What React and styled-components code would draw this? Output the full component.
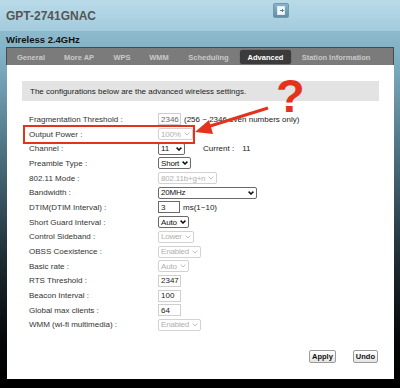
import React from 'react';
import styled, { createGlobalStyle } from 'styled-components';

const GlobalStyle = createGlobalStyle`
    html, body {
        margin: 0;
        padding: 0;
        background: #000;
    }
    body {
        font-family: 'Liberation Sans', Arial, sans-serif;
    }
`;

const Page = styled.div`
    position: relative;
    width: 400px;
    height: 388px;
    overflow: hidden;
    background: linear-gradient(180deg, #b9dbe9 0px, #a3cbdc 31px, #8dbacd 31px, #7eaec2 60px, #4d7383 150px, #1d2c33 260px, #050708 340px, #000 388px);
`;

const Header = styled.div`
    display: flex;
    align-items: center;
    height: 31px;
    padding-left: 6px;
`;

const Title = styled.div`
    font-size: 12px;
    font-weight: bold;
    color: #555;
    width: 267px;
    margin-top: 1px;
`;

const LogoutButton = styled.div`
    display: flex;
    align-items: center;
    justify-content: center;
    width: 14px;
    height: 13px;
    margin-top: -11px;
    border-radius: 2px;
    background: linear-gradient(180deg, #8ab3c8, #5f8ea6);
    border: 1px solid #6f98ad;
`;

const SubHeader = styled.div`
    display: flex;
    align-items: center;
    height: 16px;
    padding-left: 6px;
    font-size: 9.5px;
    font-weight: bold;
    color: #111;
`;

const Frame = styled.div`
    margin: 0 6px 0 6px;
`;

const TabBar = styled.div`
    display: flex;
    align-items: center;
    height: 16px;
    padding-top: 1px;
    background: #7b7b7b;
    border: 1px solid #4a4a4a;
    border-bottom: none;
`;

const Tab = styled.div`
    display: flex;
    align-items: center;
    justify-content: center;
    height: 14px;
    width: ${(p) => p.$w}px;
    border-radius: 3px;
    font-size: 7.5px;
    font-weight: bold;
    color: ${(p) => (p.$active ? '#fff' : '#c9c9c9')};
    background: ${(p) => (p.$active ? '#3b3b3b' : 'transparent')};
    box-shadow: ${(p) => (p.$active ? '0 0 1px #222' : 'none')};
`;

const Panel = styled.div`
    position: relative;
    height: 314px;
    margin-left: 1px;
    background: #fff;
    padding: 16px 15px 0 15px;
    box-sizing: border-box;
`;

const InfoBox = styled.div`
    display: flex;
    align-items: center;
    height: 20px;
    padding-left: 8px;
    background: #e3e3e3;
    font-size: 8px;
    color: #222;
`;

const Form = styled.div`
    display: grid;
    grid-template-columns: 129px 1fr;
    grid-auto-rows: 14.7px;
    margin-top: 11px;
    padding-left: 7px;
`;

const Label = styled.div`
    display: flex;
    align-items: center;
    font-size: 8px;
    color: #333;
`;

const Control = styled.div`
    display: flex;
    align-items: center;
    gap: 3px;
    font-size: 8px;
    color: #222;
`;

const Select = styled.div`
    display: flex;
    align-items: center;
    justify-content: space-between;
    gap: 3px;
    box-sizing: border-box;
    min-width: ${(p) => p.$w}px;
    height: 12px;
    padding: 0 2px 0 2px;
    border: 1px solid ${(p) => (p.$disabled ? '#d2d2d2' : '#6a6a6a')};
    border-radius: 2px;
    background: #fff;
    font-size: 8px;
    letter-spacing: -0.2px;
    color: ${(p) => (p.$disabled ? '#b0b0b0' : '#111')};
`;

const TextBox = styled.div`
    display: flex;
    align-items: center;
    box-sizing: border-box;
    width: ${(p) => p.$w || 23}px;
    height: 12px;
    padding-left: 2px;
    border: 1px solid ${(p) => (p.$dark ? '#6a6a6a' : '#cfcfcf')};
    font-size: 8px;
    color: ${(p) => (p.$muted ? '#666' : '#222')};
`;

const Current = styled.span`
    margin-left: 15px;
    margin-right: 5px;
`;

const Buttons = styled.div`
    display: flex;
    justify-content: flex-end;
    gap: 17px;
    margin-top: 18px;
    padding-right: 1px;
`;

const Button = styled.div`
    display: flex;
    align-items: center;
    justify-content: center;
    height: 11px;
    padding: 0 2px;
    border: 1px solid #9a9a9a;
    border-radius: 2px;
    background: linear-gradient(180deg, #ffffff, #e4e4e4);
    font-size: 7.5px;
    font-weight: bold;
    color: #111;
`;

const Annotation = styled.svg`
    position: absolute;
    left: 0;
    top: 0;
    pointer-events: none;
`;

const Question = styled.div`
    position: absolute;
    left: 269px;
    top: 13px;
    height: 35px;
    font-family: 'Liberation Sans', Arial, sans-serif;
    font-size: 47px;
    font-weight: bold;
    line-height: 35px;
    color: #e5321d;
`;

function Chevron({ disabled }) {
    return (
        <svg width="6" height="4" viewBox="0 0 6 4">
            <path d="M0.6 0.6 L3 3 L5.4 0.6" fill="none" stroke={disabled ? '#b8b8b8' : '#111'} strokeWidth={disabled ? 0.9 : 1.5} />
        </svg>
    );
}

function Dropdown({ value, w, disabled }) {
    return (
        <Select $w={w} $disabled={disabled}>
            <span>{value}</span>
            <Chevron disabled={disabled} />
        </Select>
    );
}

const tabs = [
    ['General', 48],
    ['More AP', 48],
    ['WPS', 38],
    ['WMM', 36],
    ['Scheduling', 63],
    ['Advanced', 51, true],
    ['Station Information', 90],
];

export default function App() {
    return (
        <Page>
            <GlobalStyle />
            <Header>
                <Title>GPT-2741GNAC</Title>
                <LogoutButton>
                    <svg width="8" height="9" viewBox="0 0 8 9">
                        <rect x="0.5" y="0.5" width="7" height="8" fill="#f3f7f9" stroke="#dfe9ee" />
                        <path d="M3 4.5 H6.5 M5 3 L6.5 4.5 L5 6" fill="none" stroke="#4f7f99" strokeWidth="1" />
                    </svg>
                </LogoutButton>
            </Header>
            <SubHeader>Wireless 2.4GHz</SubHeader>
            <Frame>
                <TabBar>
                    {tabs.map(([name, w, active]) => (
                        <Tab key={name} $w={w} $active={active}>{name}</Tab>
                    ))}
                </TabBar>
                <Panel>
                    <InfoBox>The configurations below are the advanced wireless settings.</InfoBox>
                    <Form>
                        <Label>Fragmentation Threshold :</Label>
                        <Control>
                            <TextBox $muted>2346</TextBox>
                            <span>(256 ~ 2346 even numbers only)</span>
                        </Control>

                        <Label>Output Power :</Label>
                        <Control><Dropdown value="100%" w={30} disabled /></Control>

                        <Label>Channel :</Label>
                        <Control>
                            <Dropdown value="11" w={27} />
                            <Current>Current :</Current>
                            <span>11</span>
                        </Control>

                        <Label>Preamble Type :</Label>
                        <Control><Dropdown value="Short" w={30} /></Control>

                        <Label>802.11 Mode :</Label>
                        <Control><Dropdown value="802.11b+g+n" w={54} disabled /></Control>

                        <Label>Bandwidth :</Label>
                        <Control><Dropdown value="20MHz" w={99} /></Control>

                        <Label>DTIM(DTIM Interval) :</Label>
                        <Control>
                            <TextBox $w={22} $dark>3</TextBox>
                            <span>ms(1~10)</span>
                        </Control>

                        <Label>Short Guard Interval :</Label>
                        <Control><Dropdown value="Auto" w={29} /></Control>

                        <Label>Control Sideband :</Label>
                        <Control><Dropdown value="Lower" w={32} disabled /></Control>

                        <Label>OBSS Coexistence :</Label>
                        <Control><Dropdown value="Enabled" w={40} disabled /></Control>

                        <Label>Basic rate :</Label>
                        <Control><Dropdown value="Auto" w={27} disabled /></Control>

                        <Label>RTS Threshold :</Label>
                        <Control><TextBox>2347</TextBox></Control>

                        <Label>Beacon Interval :</Label>
                        <Control><TextBox>100</TextBox></Control>

                        <Label>Global max clients :</Label>
                        <Control><TextBox>64</TextBox></Control>

                        <Label>WMM (wi-fi multimedia) :</Label>
                        <Control><Dropdown value="Enabled" w={40} disabled /></Control>
                    </Form>
                    <Buttons>
                        <Button>Apply</Button>
                        <Button>Undo</Button>
                    </Buttons>
                    <Question>?</Question>
                    <Annotation width="387" height="314">
                        <rect x="17" y="61" width="170" height="17" fill="none" stroke="#e5321d" strokeWidth="2" />
                        <path d="M261 43 L200 62" stroke="#e5321d" strokeWidth="3" />
                        <polygon points="188,67 202,55 206,69" fill="#e5321d" />
                    </Annotation>
                </Panel>
            </Frame>
        </Page>
    );
}
